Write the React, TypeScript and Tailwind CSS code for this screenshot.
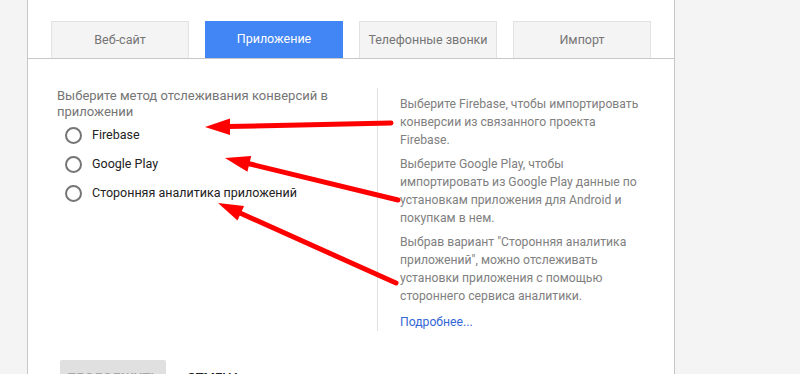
const tabs = ["Веб-сайт", "Приложение", "Телефонные звонки", "Импорт"];

const options = ["Firebase", "Google Play", "Сторонняя аналитика приложений"];

const Arrows = () => (
  <svg
    className="absolute inset-0 pointer-events-none"
    width="800"
    height="374"
    viewBox="0 0 800 374"
  >
    <g stroke="#ff0000" strokeWidth="5" strokeLinecap="round" fill="none">
      <line x1="391" y1="123" x2="228" y2="126.5" />
      <line x1="398" y1="200" x2="248" y2="163.5" />
      <line x1="396" y1="283" x2="240" y2="213" />
    </g>
    <g fill="#ff0000">
      <polygon points="205,127 230,118.5 230,135" />
      <polygon points="225,158 251.2,156.1 247.4,171.7" />
      <polygon points="218,203 244.1,206 237.5,220.5" />
    </g>
  </svg>
);

export default function App() {
  return (
    <div
      className="relative w-[800px] h-[374px] overflow-hidden flex bg-[#f4f4f4]"
      style={{ fontFamily: "Roboto, 'Liberation Sans', sans-serif" }}
    >
      {/* left gutter */}
      <div className="w-[28px] shrink-0 border-r border-[#c6c6c6]" />

      {/* main card */}
      <div className="w-[647px] shrink-0 bg-white border-r border-[#c6c6c6] flex flex-col">
        {/* Tabs */}
        <div className="pt-[21px] px-[23px] flex gap-[16px] border-b border-[#c8c8c8]">
          {tabs.map((t, i) =>
            i === 1 ? (
              <div
                key={t}
                className="w-[138px] h-[37px] bg-[#4285f4] text-white text-[12.5px] flex items-center justify-center"
              >
                {t}
              </div>
            ) : (
              <div
                key={t}
                className="w-[138px] h-[37px] bg-[#f4f4f4] border border-b-0 border-[#e2e2e2] text-[#757575] text-[12.5px] flex items-center justify-center"
              >
                {t}
              </div>
            )
          )}
        </div>

        {/* Content */}
        <div className="pt-[29px] pl-[29px] flex">
          <div className="w-[320px] shrink-0">
            <p className="text-[13px] leading-[16px] text-[#757575]">
              Выберите метод отслеживания конверсий в
              <br />
              приложении
            </p>
            <div className="mt-[1px] flex flex-col">
              {options.map((o) => (
                <label key={o} className="h-[29px] flex items-center gap-[10px] pl-[8px]">
                  <span className="w-[17px] h-[17px] rounded-full border-2 border-[#757575]" />
                  <span className="text-[12.5px] text-[#222222]">{o}</span>
                </label>
              ))}
            </div>
          </div>

          <div className="h-[243px] border-l border-[#e0e0e0] pl-[22px] pt-[7px] text-[12.2px] leading-[18px] text-[#808080] whitespace-nowrap">
            <p className="mb-[6px]">
              Выберите Firebase, чтобы импортировать
              <br />
              конверсии из связанного проекта
              <br />
              Firebase.
            </p>
            <p className="mb-[6px]">
              Выберите Google Play, чтобы
              <br />
              импортировать из Google Play данные по
              <br />
              установкам приложения для Android и
              <br />
              покупкам в нем.
            </p>
            <p>
              Выбрав вариант "Сторонняя аналитика
              <br />
              приложений", можно отслеживать
              <br />
              установки приложения с помощью
              <br />
              стороннего сервиса аналитики.
            </p>
            <a className="block mt-[8px] text-[#3367d6]">Подробнее...</a>
          </div>
        </div>

        {/* Footer buttons */}
        <div className="mt-[29px] pl-[32px] flex items-start gap-[21px]">
          <button className="w-[106px] h-[34px] pt-[10px] rounded-[2px] bg-[#e0e0e0] text-[#a6a6a6] text-[13px] leading-[16px] font-medium uppercase flex justify-center items-start">
            Продолжить
          </button>
          <button className="h-[34px] pt-[10px] text-[#212121] text-[13px] leading-[16px] font-medium uppercase flex items-start">
            Отмена
          </button>
        </div>
      </div>

      <div className="flex-1" />

      <Arrows />
    </div>
  );
}
